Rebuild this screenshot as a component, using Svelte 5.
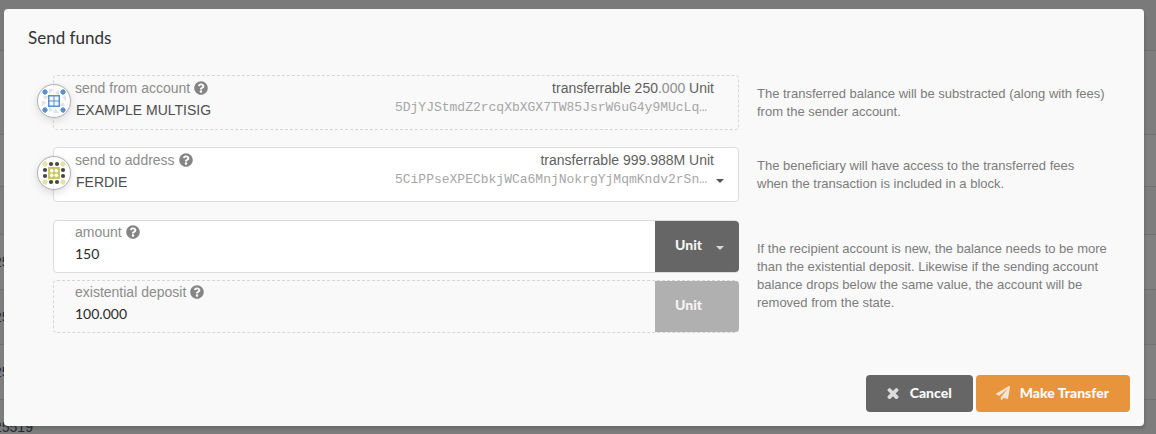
<script>
  let recipient = $state('FERDIE');
  let amount = $state('150');
  let unit = $state('Unit');

  // heights of the table rows that lie under the dimmer
  const rows = [
    { h: 51, text: '' },
    { h: 84, text: '' },
    { h: 52, text: '' },
    { h: 48, text: '' },
    { h: 55, text: '25519' },
    { h: 55, text: '25519' },
    { h: 55, text: '25519' },
    { h: 55, text: '25519' }
  ];
</script>

{#snippet help()}
  <svg class="help" viewBox="0 0 512 512" aria-hidden="true">
    <path d="M504 256c0 136.997-111.043 248-248 248S8 392.997 8 256C8 119.083 119.043 8 256 8s248 111.083 248 248zM262.655 90c-54.497 0-89.255 22.957-116.549 63.758-3.536 5.286-2.353 12.415 2.715 16.258l34.699 26.31c5.205 3.947 12.621 3.008 16.665-2.122 17.864-22.658 30.113-35.797 57.303-35.797 20.429 0 45.698 13.148 45.698 32.958 0 14.976-12.363 22.667-32.534 33.976C247.128 238.528 216 254.941 216 296v4c0 6.627 5.373 12 12 12h56c6.627 0 12-5.373 12-12v-1.333c0-28.462 83.186-29.647 83.186-106.667 0-58.002-60.165-102-116.531-102zM256 338c-25.365 0-46 20.635-46 46 0 25.364 20.635 46 46 46s46-20.636 46-46c0-25.364-20.635-46-46-46z" />
  </svg>
{/snippet}

{#snippet caret()}
  <svg class="caret" viewBox="0 0 8 4" aria-hidden="true"><path d="M0 0h8L4 4z" /></svg>
{/snippet}

<div class="page">
  <div class="under" aria-hidden="true">
    {#each rows as row}
      <div class="line" style="height: {row.h}px">{row.text}</div>
    {/each}
  </div>

  <form class="modal" onsubmit={(e) => e.preventDefault()}>
    <h1>Send funds</h1>

    <div class="rows">
      <div class="row">
        <div class="field dashed">
          <svg class="avatar" viewBox="-16 -16 32 32" aria-hidden="true">
            <g fill="#e2e2e2">
              <path d="M-5-12 0-12-5-7zM5-11v6L1-8zM12-5v5L8-4zM11 5H5l4-4zM5 12H0l1-5zM-5 11V5l4 4zM-12 5V0l5 1zM-11-5h6l-4 4z" />
            </g>
            <g fill="#5b92cb">
              <path d="M-6-6H6V6H-6z" />
              <path d="M-9-12l3 3-3 3-3-3zM9-12l3 3-3 3-3-3zM-9 6l3 3-3 3-3-3zM9 6l3 3-3 3-3-3z" />
              <circle cx="-9" cy="-9" r="2.4" /><circle cx="9" cy="-9" r="2.4" />
              <circle cx="-9" cy="9" r="2.4" /><circle cx="9" cy="9" r="2.4" />
            </g>
            <path d="M-4.500-4.500h4v4h-4zM.5-4.500h4v4h-4zM-4.500.5h4v4h-4zM.5.5h4v4h-4z" fill="#f4f8fc" />
          </svg>
          <div class="main">
            <label for="from">send from account {@render help()}</label>
            <input id="from" class="account" value="EXAMPLE MULTISIG" readonly />
          </div>
          <div class="side">
            <div class="balance">transferrable 250<span>.000</span> Unit</div>
            <div class="address">5DjYJStmdZ2rcqXbXGX7TW85JsrW6uG4y9MUcLq…</div>
          </div>
        </div>
        <p>The transferred balance will be substracted (along with fees) from the sender account.</p>
      </div>

      <div class="row">
        <div class="field">
          <svg class="avatar" viewBox="-16 -16 32 32" aria-hidden="true">
            <path d="M-6-6H6V6H-6z" fill="#c8c960" />
            <g fill="#fff">
              <circle cx="-2.300" cy="-2.300" r="1.800" /><circle cx="2.300" cy="-2.300" r="1.800" />
              <circle cx="-2.300" cy="2.300" r="1.800" /><circle cx="2.300" cy="2.300" r="1.800" />
            </g>
            <path d="M-9-12l3 3-3 3-3-3zM9-12l3 3-3 3-3-3zM-9 6l3 3-3 3-3-3zM9 6l3 3-3 3-3-3z" fill="#e2e2aa" />
            <g fill="#e2e2aa">
              <circle cx="-9" cy="-9" r="2.4" /><circle cx="9" cy="-9" r="2.4" />
              <circle cx="-9" cy="9" r="2.4" /><circle cx="9" cy="9" r="2.4" />
            </g>
            <g fill="#454545">
              <circle cx="-3" cy="-9" r="2.1" /><circle cx="3" cy="-9" r="2.1" />
              <circle cx="-3" cy="9" r="2.1" /><circle cx="3" cy="9" r="2.1" />
              <circle cx="-9" cy="-3" r="2.1" /><circle cx="-9" cy="3" r="2.1" />
              <circle cx="9" cy="-3" r="2.1" /><circle cx="9" cy="3" r="2.1" />
            </g>
          </svg>
          <div class="main">
            <label for="to">send to address {@render help()}</label>
            <select id="to" class="account" bind:value={recipient}>
              <option>FERDIE</option>
            </select>
          </div>
          <div class="side">
            <div class="balance">transferrable 999.988M Unit</div>
            <div class="address">5CiPPseXPECbkjWCa6MnjNokrgYjMqmKndv2rSn…</div>
          </div>
          {@render caret()}
        </div>
        <p>The beneficiary will have access to the transferred fees when the transaction is included in a block.</p>
      </div>

      <div class="row">
        <div class="amounts">
          <div class="field joined">
            <div class="main">
              <label for="amount">amount {@render help()}</label>
              <input id="amount" bind:value={amount} />
            </div>
            <div class="unit">
              <select aria-label="unit" bind:value={unit}>
                <option>Unit</option>
              </select>
              {@render caret()}
            </div>
          </div>
          <div class="field joined dashed">
            <div class="main">
              <label for="deposit">existential deposit {@render help()}</label>
              <input id="deposit" value="100.000" readonly />
            </div>
            <div class="unit off">
              <button type="button" disabled>Unit</button>
            </div>
          </div>
        </div>
        <p>If the recipient account is new, the balance needs to be more than the existential deposit. Likewise if the sending account balance drops below the same value, the account will be removed from the state.</p>
      </div>
    </div>

    <div class="actions">
      <button type="button" class="cancel">
        <svg viewBox="256 256 1280 1280" width="14" height="12" aria-hidden="true">
          <path d="M1490 1322q0 40-28 68l-136 136q-28 28-68 28t-68-28l-294-294-294 294q-28 28-68 28t-68-28l-136-136q-28-28-28-68t28-68l294-294-294-294q-28-28-28-68t28-68l136-136q28-28 68-28t68 28l294 294 294-294q28-28 68-28t68 28l136 136q28 28 28 68t-28 68l-294 294 294 294q28 28 28 68z" />
        </svg>
        Cancel
      </button>
      <button type="submit" class="send">
        <svg viewBox="0 0 512 512" width="14" height="14" aria-hidden="true">
          <path d="M476 3.200L12.500 270.600c-18.100 10.400-15.800 35.600 2.200 43.200L121 358.400l287.300-253.200c5.500-4.900 13.300 2.600 8.600 8.300L176 407v80.500c0 23.600 28.500 32.900 42.500 15.800L282 426l124.600 52.200c14.200 6 30.400-2.900 33-18.200l72-432C515 7.800 493.300-6.800 476 3.200z" />
        </svg>
        Make Transfer
      </button>
    </div>
  </form>
</div>

<style>
  :global(body) {
    margin: 0;
  }

  .page {
    position: relative;
    box-sizing: border-box;
    min-height: 100vh;
    padding: 9px 12px 8px 4px;
    overflow: hidden;
    background: #7d7d7d;
    font: 14px/18px "Liberation Sans", Arial, sans-serif;
  }

  .under {
    position: absolute;
    inset: 0;
    overflow: hidden;
  }

  .line {
    box-sizing: border-box;
    display: flex;
    align-items: center;
    border-bottom: 1px solid #707070;
    color: #262a33;
    text-indent: -6px;
  }

  .line:nth-child(odd) {
    background: #808080;
  }

  .line:first-child {
    background: #7a7a7a;
  }

  .modal {
    position: relative;
    padding: 15px 14px 14px 24px;
    border-radius: 4px;
    background: #f9f9f9;
    box-shadow: 1px 3px 3px rgba(0, 0, 0, 0.15);
  }

  h1 {
    margin: 0 0 23px;
    font: 400 17px/28px Lato, sans-serif;
    color: #333;
  }

  .rows {
    display: flex;
    flex-direction: column;
    gap: 17px;
    padding: 0 10px 0 25px;
  }

  .row {
    display: grid;
    grid-template-columns: minmax(0, 686fr) minmax(0, 363fr);
    gap: 18px;
    align-items: center;
  }

  p {
    margin: 0;
    padding-right: 12px;
    font-size: 13px;
    color: #7c7c7c;
  }

  .field {
    position: relative;
    box-sizing: border-box;
    display: flex;
    min-height: 55px;
    padding: 3px 24px 3px 21px;
    border: 1px solid #dcdcdc;
    border-radius: 4px;
    background: #fff;
  }

  .dashed {
    border-style: dashed;
    border-color: #d6d6d6;
    background: transparent;
  }

  .main {
    flex: 1;
    min-width: 0;
    display: flex;
    flex-direction: column;
  }

  label {
    display: flex;
    align-items: center;
    gap: 4px;
    color: #8c8c8c;
  }

  .help {
    width: 14px;
    height: 14px;
    fill: #858585;
  }

  input,
  .main select {
    box-sizing: border-box;
    width: 100%;
    height: 26px;
    margin: 0;
    padding: 0;
    border: 0;
    outline: 0;
    background: none;
    appearance: none;
    font: 400 14px/26px Lato, sans-serif;
    color: #2b2b2b;
  }

  .main .account {
    padding-left: 1px;
    font-family: "Liberation Sans", Arial, sans-serif;
    color: #4e4e4e;
  }

  .side {
    display: flex;
    flex-direction: column;
    align-items: flex-end;
    color: #5f5f5f;
  }

  .balance span {
    color: #8e8e8e;
  }

  .address {
    padding-right: 7px;
    font: 13px/22px "Liberation Mono", monospace;
    color: #a6a6a6;
  }

  .avatar {
    position: absolute;
    top: 8px;
    left: -17px;
    box-sizing: border-box;
    width: 34px;
    height: 34px;
    border: 1px solid #b4b4b4;
    border-radius: 50%;
    background: rgba(255, 255, 255, 0.6);
    box-shadow: 0 0 1px #bbb, 0 3px 8px rgba(0, 0, 0, 0.12);
  }

  .caret {
    position: absolute;
    top: 31px;
    right: 14px;
    width: 8px;
    height: 4px;
    fill: #555;
  }

  .amounts {
    display: flex;
    flex-direction: column;
    gap: 7px;
    padding-top: 1px;
  }

  .joined {
    min-height: 53px;
    padding: 2px 0 0 21px;
  }

  .unit {
    position: relative;
    flex: none;
    display: flex;
    width: 84px;
    margin: -2px -1px 0 0;
    border-radius: 0 4px 4px 0;
    background: #666;
  }

  .unit.off {
    background: #b0b0b0;
  }

  .unit select,
  .unit button {
    width: 100%;
    padding: 0 20px 3px;
    border: 0;
    background: none;
    appearance: none;
    font: 900 14px/18px Lato, sans-serif;
    text-align: left;
    color: #f4f4f4;
  }

  .unit .caret {
    top: 25px;
    right: 15px;
    fill: #d8d8d8;
  }

  .actions {
    display: flex;
    justify-content: flex-end;
    gap: 3px;
    margin-top: 42px;
  }

  .actions button {
    display: flex;
    align-items: center;
    gap: 10px;
    height: 37px;
    padding: 0 21px 1px 20px;
    border: 0;
    border-radius: 4px;
    font: 900 14px/18px Lato, sans-serif;
    color: #fafafa;
  }

  .actions svg {
    fill: currentColor;
    opacity: 0.8;
  }

  .cancel {
    background: #666;
  }

  .send {
    background: #e8943c;
  }
</style>
